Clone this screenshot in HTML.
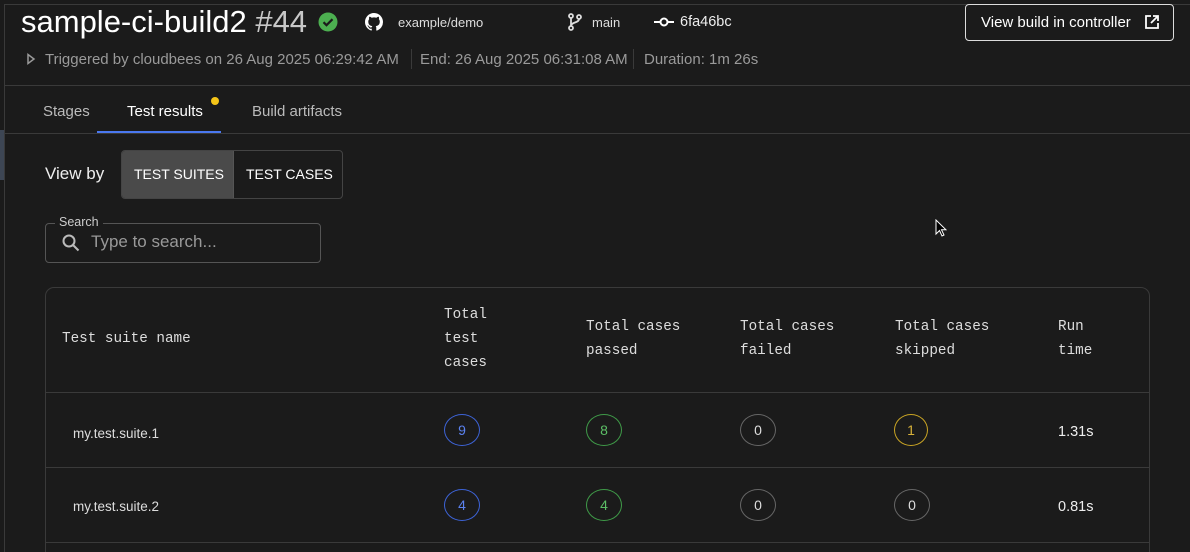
<!DOCTYPE html>
<html style="height:552px;overflow:hidden"><head><style>
*{box-sizing:border-box;margin:0;padding:0}
body{width:1190px;height:552px;overflow:hidden;background:#1b1b1b;color:#e8e8e8;font-family:"Liberation Sans",sans-serif;position:relative}
.abs{position:absolute}
.line{position:absolute;background:#3a3a3a}
.mono{font-family:"Liberation Mono",monospace;font-size:14.3px;line-height:24px;color:#ddd}
.badge{position:absolute;width:36px;height:32px;border:1px solid;border-radius:50%;text-align:center;line-height:30px;font-size:14px}
.cell{position:absolute;font-size:13.5px;color:#ddd}
</style></head><body>
<div class="line" style="left:4px;top:4px;width:1186px;height:1px"></div>
<div class="line" style="left:4px;top:4px;width:1px;height:548px"></div>
<div class="abs" style="left:0;top:130px;width:4px;height:50px;background:#3d4654"></div>

<div class="abs" style="left:21px;top:4px;font-size:31px;color:#fff;line-height:36px;white-space:nowrap">sample-ci-build2 <span style="color:#c8c8c8">#44</span></div>
<svg class="abs" style="left:318px;top:12px" width="20" height="20" viewBox="0 0 20 20"><circle cx="10" cy="10" r="9.5" fill="#4caf50"/><path d="M5.5 10.2l3 3 6-6" stroke="#1b1b1b" stroke-width="2.2" fill="none"/></svg>
<svg class="abs" style="left:365px;top:13px" width="18" height="18" viewBox="0 0 16 16"><path fill="#fff" d="M8 0C3.58 0 0 3.58 0 8c0 3.540 2.29 6.53 5.47 7.59.4.07.55-.17.55-.38v-1.33c-2.23.48-2.7-1.07-2.7-1.07-.36-.92-.89-1.170-.89-1.17-.73-.5.06-.49.06-.49.8.06 1.230.83 1.23.83.72 1.23 1.88.87 2.34.67.07-.52.28-.87.51-1.07-1.78-.2-3.64-.89-3.64-3.95 0-.87.31-1.59.82-2.15-.08-.2-.36-1.02.08-2.12 0 0 .67-.21 2.2.82a7.6 7.6 0 014 0c1.53-1.04 2.2-.82 2.2-.82.44 1.1.16 1.92.08 2.12.51.56.82 1.27.82 2.15 0 3.07-1.87 3.75-3.65 3.95.29.25.54.73.54 1.48v2.2c0 .21.15.46.55.38A8.01 8.01 0 0016 8c0-4.42-3.58-8-8-8z"/></svg>
<div class="abs" style="left:398px;top:15px;font-size:13px;color:#ddd">example/demo</div>
<svg class="abs" style="left:567px;top:13px" width="16" height="18" viewBox="0 0 16 18" fill="none" stroke="#ddd" stroke-width="1.8"><circle cx="4" cy="3" r="2"/><circle cx="4" cy="15" r="2"/><circle cx="12" cy="4" r="2"/><path d="M4 5v8M12 6c0 4-8 3-8 7"/></svg>
<div class="abs" style="left:592px;top:15px;font-size:13px;color:#ddd">main</div>
<svg class="abs" style="left:654px;top:15px" width="20" height="14" viewBox="0 0 20 14" fill="none" stroke="#fff" stroke-width="2"><circle cx="10" cy="7" r="3.5"/><path d="M0 7h6M14 7h6"/></svg>
<div class="abs" style="left:680px;top:14px;font-size:14.5px;color:#eee">6fa46bc</div>

<div class="abs" style="left:965px;top:4px;width:209px;height:37px;border:1px solid #ddd;border-radius:4px"></div>
<div class="abs" style="left:981px;top:14px;font-size:15px;color:#fff;white-space:nowrap">View build in controller</div>
<svg class="abs" style="left:1144px;top:14px" width="16" height="16" viewBox="0 0 16 16" fill="none" stroke="#fff" stroke-width="1.8"><path d="M7 2H2v12h12V9M9 2h5v5M14 2L7 9"/></svg>

<svg class="abs" style="left:26px;top:53px" width="10" height="12" viewBox="0 0 10 12" fill="none" stroke="#999" stroke-width="1.5"><path d="M2 1.5l6 4.5-6 4.5z"/></svg>
<div class="abs" style="left:45px;top:51px;font-size:15px;color:#9a9a9a;white-space:nowrap">Triggered by cloudbees on 26 Aug 2025 06:29:42 AM</div>
<div class="line" style="left:411px;top:49px;width:1px;height:20px"></div>
<div class="abs" style="left:420px;top:51px;font-size:15px;color:#9a9a9a;white-space:nowrap">End: 26 Aug 2025 06:31:08 AM</div>
<div class="line" style="left:633px;top:49px;width:1px;height:20px"></div>
<div class="abs" style="left:644px;top:51px;font-size:15px;color:#9a9a9a;white-space:nowrap">Duration: 1m 26s</div>

<div class="line" style="left:4px;top:85px;width:1186px;height:1px"></div>
<div class="abs" style="left:43px;top:103px;font-size:15px;color:#bbb">Stages</div>
<div class="abs" style="left:127px;top:103px;font-size:15px;color:#fff">Test results</div>
<div class="abs" style="left:211px;top:97px;width:8px;height:8px;border-radius:50%;background:#f5c518"></div>
<div class="abs" style="left:252px;top:103px;font-size:15px;color:#bbb">Build artifacts</div>
<div class="abs" style="left:97px;top:131px;width:124px;height:2px;background:#4a78f0"></div>
<div class="line" style="left:4px;top:133px;width:1186px;height:1px"></div>

<div class="abs" style="left:45px;top:164px;font-size:17px;color:#eee">View by</div>
<div class="abs" style="left:121px;top:150px;width:222px;height:49px;border:1px solid #444;border-radius:4px;overflow:hidden">
 <div class="abs" style="left:0;top:0;width:112px;height:47px;background:#4a4a4a;border-right:1px solid #555"></div>
 <div class="abs" style="left:12px;top:15px;font-size:14px;color:#fff">TEST SUITES</div>
 <div class="abs" style="left:124px;top:15px;font-size:14px;color:#fff">TEST CASES</div>
</div>

<div class="abs" style="left:45px;top:223px;width:276px;height:40px;border:1px solid #555;border-radius:4px"></div>
<div class="abs" style="left:55px;top:215px;padding:0 4px;background:#1b1b1b;font-size:12.5px;color:#ccc">Search</div>
<svg class="abs" style="left:61px;top:233px" width="20" height="20" viewBox="0 0 20 20" fill="none" stroke="#bbb" stroke-width="2"><circle cx="8" cy="8" r="5.5"/><path d="M12 12l5.5 5.5"/></svg>
<div class="abs" style="left:91px;top:232px;font-size:17px;color:#999">Type to search...</div>

<div class="abs" style="left:0;top:0;width:1190px;height:552px;overflow:hidden">
<div class="abs" style="left:45px;top:287px;width:1105px;height:280px;border:1px solid #3a3a3a;border-radius:9px"></div>
</div>
<div class="line" style="left:45px;top:392px;width:1105px;height:1px"></div>
<div class="line" style="left:45px;top:467px;width:1105px;height:1px"></div>
<div class="line" style="left:45px;top:542px;width:1105px;height:1px"></div>

<div class="abs mono" style="left:62px;top:327px">Test suite name</div>
<div class="abs mono" style="left:444px;top:303px">Total<br>test<br>cases</div>
<div class="abs mono" style="left:586px;top:315px">Total cases<br>passed</div>
<div class="abs mono" style="left:740px;top:315px">Total cases<br>failed</div>
<div class="abs mono" style="left:895px;top:315px">Total cases<br>skipped</div>
<div class="abs mono" style="left:1058px;top:315px">Run<br>time</div>

<div class="cell" style="left:73px;top:426px">my.test.suite.1</div>
<div class="badge" style="left:444px;top:414px;border-color:#3d63d6;color:#5b82f0">9</div>
<div class="badge" style="left:586px;top:414px;border-color:#3f9a48;color:#5cbf66">8</div>
<div class="badge" style="left:740px;top:414px;border-color:#666;color:#ddd">0</div>
<div class="badge" style="left:894px;top:414px;width:34px;border-color:#c9a424;color:#d8b23a">1</div>
<div class="cell" style="left:1058px;top:424px;font-size:14.5px;color:#eee">1.31s</div>

<div class="cell" style="left:73px;top:499px">my.test.suite.2</div>
<div class="badge" style="left:444px;top:489px;border-color:#3d63d6;color:#5b82f0">4</div>
<div class="badge" style="left:586px;top:489px;border-color:#3f9a48;color:#5cbf66">4</div>
<div class="badge" style="left:740px;top:489px;border-color:#666;color:#ddd">0</div>
<div class="badge" style="left:894px;top:489px;border-color:#666;color:#ddd">0</div>
<div class="cell" style="left:1058px;top:499px;font-size:14.5px;color:#eee">0.81s</div>

<svg class="abs" style="left:935px;top:219px" width="12" height="18" viewBox="0 0 12 18"><path d="M1 1v14l3.5-3.5 2.5 5.5 2-1-2.5-5.2H11z" fill="#000" stroke="#fff" stroke-width="1"/></svg>
</body></html>
